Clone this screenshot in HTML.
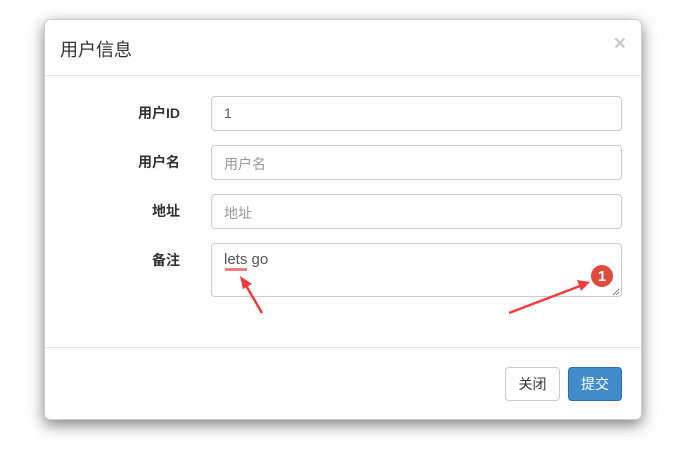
<!DOCTYPE html><html><head><meta charset="utf-8"><style>
body{margin:0;width:689px;height:459px;background:#fff;font-family:"Liberation Sans","Noto Sans CJK SC",sans-serif;position:relative;overflow:hidden;color:#333}
.m{position:absolute;left:44px;top:19px;width:598px;height:401px;border:1px solid rgba(0,0,0,.2);border-radius:6px;box-sizing:border-box;box-shadow:0 5px 15px rgba(0,0,0,.5);background:#fff}
.t{position:absolute;left:15px;top:16px;font-size:18px}
.x{position:absolute;right:15px;top:12px;font-size:21px;font-weight:bold;color:#ccc}
.hr{position:absolute;left:0;right:0;height:1px;background:#e5e5e5}
.l{position:absolute;right:461px;font-size:14px;font-weight:bold;width:100px;text-align:right}
.i{position:absolute;left:166px;width:411px;height:35px;border:1px solid #ccc;border-radius:4px;box-sizing:border-box;font-size:14px;padding:8px 12px;color:#999}
.b{position:absolute;top:347px;height:34px;border-radius:4px;box-sizing:border-box;font-size:14px;line-height:32px;text-align:center}
</style></head><body>
<div class="m">
<div class="t">用户信息</div><div class="x">×</div>
<div class="hr" style="top:55px"></div>
<div class="l" style="top:83px">用户ID</div><div class="i" style="top:76px;color:#555">1</div>
<div class="l" style="top:132px">用户名</div><div class="i" style="top:125px">用户名</div>
<div class="l" style="top:181px">地址</div><div class="i" style="top:174px">地址</div>
<div class="l" style="top:230px">备注</div><div class="i" style="top:223px;height:54px;color:#555;padding-top:7px;font-size:15px">lets go</div>
<div style="position:absolute;left:180px;top:248px;width:22px;height:3px;background:#f07f7f"></div>
<div class="hr" style="top:327px"></div>
<div class="b" style="left:460px;width:55px;border:1px solid #ccc;background:#fff">关闭</div>
<div class="b" style="left:523px;width:54px;border:1px solid #2e6da4;background:#428bca;color:#fff">提交</div>
</div>
<svg width="689" height="459" style="position:absolute;left:0;top:0">
<line x1="262" y1="313" x2="244" y2="282" stroke="#f03c3c" stroke-width="2.5"/>
<polygon points="240,276 252,284 243,289" fill="#f03c3c"/>
<line x1="509" y1="313" x2="580" y2="286" stroke="#f03c3c" stroke-width="2.5"/>
<polygon points="590,282 577,280 581,291" fill="#f03c3c"/>
<circle cx="602" cy="276" r="11" fill="#e0493c"/>
<text x="602" y="281" font-size="15" font-weight="bold" fill="#fff" text-anchor="middle" font-family="Liberation Sans">1</text>
<path d="M613 295L619 289M616 295L619 292" stroke="#888" stroke-width="1"/>
</svg>
</body></html>
